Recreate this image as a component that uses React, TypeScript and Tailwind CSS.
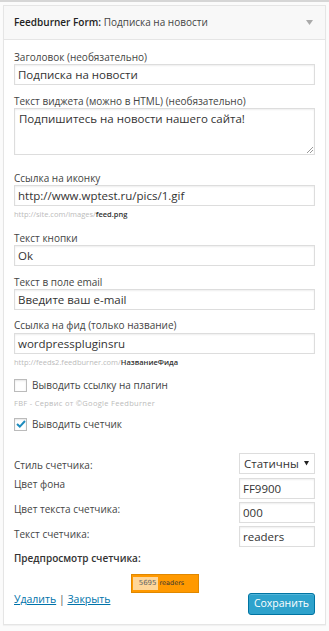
export default function App() {
  const label = "text-[10px] leading-[12px] text-[#444]"
  const input = "block w-full h-[21px] border border-[#ddd] bg-white px-[3px] text-[11.5px] leading-[19px] text-[#333] shadow-[inset_0_1px_2px_rgba(0,0,0,0.07)] whitespace-nowrap overflow-hidden"
  const small = "w-[76px] h-[21px] border border-[#ddd] bg-white px-[3px] text-[11.5px] leading-[19px] text-[#333] shadow-[inset_0_1px_2px_rgba(0,0,0,0.07)]"
  return (
    <div className="w-[329px] h-[631px] bg-[#fbfbfb] pt-[3px] px-[3px] border-t-2 border-[#d6d6d6]" style={{ fontFamily: '"Open Sans", "Noto Sans", sans-serif' }}>
      <div className="border border-[#e5e5e5] bg-white shadow-[0_1px_1px_rgba(0,0,0,0.04)]">
        <div className="h-[34px] flex items-center justify-between bg-[#f8f8f8] border-b border-[#e5e5e5] pl-[10px] pr-[12px]">
          <div className="text-[10px] text-[#222]">
            <span className="font-semibold">Feedburner Form:</span>{" "}
            <span className="text-[#444]">Подписка на новости</span>
          </div>
          <svg width="7" height="5" viewBox="0 0 7 5"><path d="M0 0h7L3.5 5z" fill="#aaa" /></svg>
        </div>
        <div className="px-[10px] pt-[11px] pb-[9px] flex flex-col">
          <div className={label}>Заголовок (необязательно)</div>
          <div className={input + " mt-[1px]"}>Подписка на новости</div>

          <div className={label + " mt-[10px]"}>Текст виджета (можно в HTML) (необязательно)</div>
          <div className="relative mt-[1px] h-[47px] border border-[#ddd] px-[4px] pt-[1px] text-[11.5px] leading-[17px] text-[#333] shadow-[inset_0_1px_2px_rgba(0,0,0,0.07)]">
            Подпишитесь на новости нашего сайта!
            <svg className="absolute right-[1px] bottom-[1px]" width="6" height="6" viewBox="0 0 6 6"><path d="M6 0L0 6M6 3L3 6" stroke="#999" strokeWidth="1" /></svg>
          </div>

          <div className={label + " mt-[17px]"}>Ссылка на иконку</div>
          <div className={input + " mt-[1px]"}>http://www.wptest.ru/pics/1.gif</div>
          <div className="text-[7.5px] leading-[10px] mt-[3px] text-[#bbb]">http://site.com/images/<b className="text-[#333] font-semibold">feed.png</b></div>

          <div className={label + " mt-[13px]"}>Текст кнопки</div>
          <div className={input + " mt-[1px]"}>Ok</div>

          <div className={label + " mt-[10px]"}>Текст в поле email</div>
          <div className={input + " mt-[1px]"}>Введите ваш e-mail</div>

          <div className={label + " mt-[9px]"}>Ссылка на фид (только название)</div>
          <div className={input + " mt-[2px]"}>wordpresspluginsru</div>
          <div className="text-[7.5px] leading-[10px] mt-[3px] text-[#bbb]">http://feeds2.feedburner.com/<b className="text-[#333] font-semibold">НазваниеФида</b></div>

          <div className="flex items-center mt-[10px] h-[16px]">
            <span className="w-[13px] h-[13px] border border-[#bbb] bg-white shadow-[inset_0_1px_2px_rgba(0,0,0,0.1)]" />
            <span className="ml-[5px] text-[10px] text-[#444]">Выводить ссылку на плагин</span>
          </div>
          <div className="text-[7.5px] leading-[10px] mt-[5px] text-[#bbb] tracking-[0.3px]">FBF - Сервис от ©Google Feedburner</div>
          <div className="flex items-center mt-[8px] h-[16px]">
            <span className="w-[13px] h-[13px] border border-[#bbb] bg-white shadow-[inset_0_1px_2px_rgba(0,0,0,0.1)] flex items-center justify-center">
              <svg width="10" height="8" viewBox="0 0 10 8"><path d="M1 4L3.8 6.6L9 1" stroke="#1e8cbe" strokeWidth="2" fill="none" /></svg>
            </span>
            <span className="ml-[5px] text-[10px] text-[#444]">Выводить счетчик</span>
          </div>

          <div className="flex items-center justify-between mt-[21px]">
            <span className={label + " mt-[2px]"}>Стиль счетчика:</span>
            <div className="w-[76px] h-[21px] border border-[#ddd] bg-white flex items-center justify-between pl-[4px] pr-[5px] text-[11.5px] text-[#333]">
              <span>Статичны</span>
              <svg width="5" height="5" viewBox="0 0 5 5"><path d="M0 0h5L2.5 4.5z" fill="#222" /></svg>
            </div>
          </div>
          <div className="flex items-start justify-between mt-[4px]">
            <span className={label}>Цвет фона</span>
            <div className={small}>FF9900</div>
          </div>
          <div className="flex items-start justify-between mt-[3px]">
            <span className={label + " mt-[1px]"}>Цвет текста счетчика:</span>
            <div className={small}>000</div>
          </div>
          <div className="flex items-start justify-between mt-[3px]">
            <span className={label + " mt-[2px]"}>Текст счетчика:</span>
            <div className={small}>readers</div>
          </div>
          <div className="text-[10px] leading-[12px] font-semibold text-[#333] mt-[5px]">Предпросмотр счетчика:</div>
          <div className="flex justify-center mt-[10px]">
            <div className="w-[68px] h-[19px] bg-[#ff9900] border border-[#e08800] flex items-center px-[1px] gap-[2px]">
              <span className="w-[25px] h-[13px] bg-[#ffd699] text-[7px] leading-[13px] text-right pr-[1px] text-[#666]" style={{ fontFamily: 'Verdana, "DejaVu Sans", sans-serif' }}>5695</span>
              <span className="text-[6.5px] text-[#333]" style={{ fontFamily: 'Verdana, "DejaVu Sans", sans-serif' }}>readers</span>
            </div>
          </div>
          <div className="flex items-start justify-between">
            <div className="text-[10.5px] leading-[12px] text-[#555]">
              <a className="text-[#0073aa] underline">Удалить</a> | <a className="text-[#0073aa] underline">Закрыть</a>
            </div>
            <button className="h-[22px] w-[67px] rounded-[3px] bg-[#2ea2cc] border border-[#0074a2] text-white text-[10.5px] shadow-[inset_0_1px_0_rgba(120,200,230,0.5)]">Сохранить</button>
          </div>
        </div>
      </div>
    </div>
  )
}
